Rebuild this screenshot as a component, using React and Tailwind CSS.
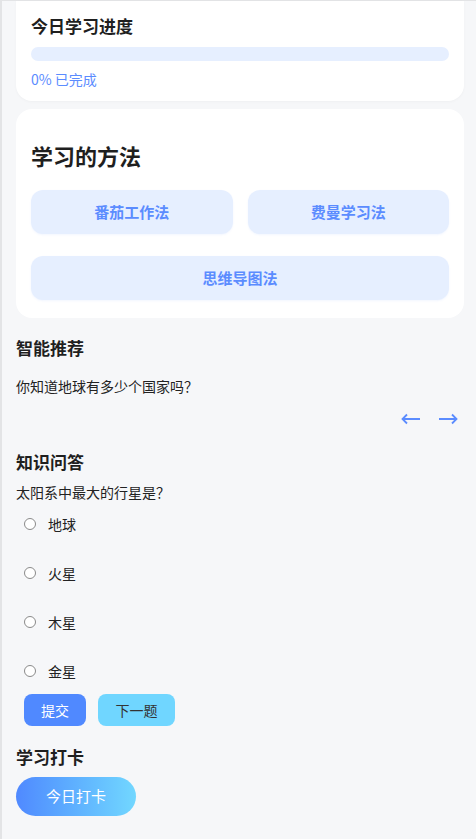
import React, { useState } from 'react';

const font = { fontFamily: '"Noto Sans CJK SC", "Noto Sans", sans-serif' };

const methods = ['番茄工作法', '费曼学习法'];
const options = ['地球', '火星', '木星', '金星'];

export default function App() {
  const [answer, setAnswer] = useState(null);

  return (
    <div
      style={font}
      className="min-h-[839px] bg-[#f6f7f9] border-t border-l-2 border-[#e3e4e6] pl-[14px] pr-[12px] pb-6 text-[#222]"
    >
      {/* Today progress */}
      <div className="bg-white rounded-b-2xl px-[15px] pt-[13px] pb-[12px] shadow-[0_1px_3px_rgba(0,0,0,0.03)]">
        <h3 className="text-[17px] leading-6 font-bold text-[#1f1f1f]">今日学习进度</h3>
        <div className="mt-[9px] h-[14px] rounded-full bg-[#e6efff]" />
        <p className="mt-[8px] text-[14px] leading-5 text-[#5b8cff]">0% 已完成</p>
      </div>

      {/* Methods */}
      <div className="mt-2 bg-white rounded-2xl px-[15px] pt-[31px] pb-[18px]">
        <h2 className="text-[22px] leading-[30px] font-bold text-[#1f1f1f]">学习的方法</h2>
        <div className="mt-5 grid grid-cols-2 gap-x-[15px] gap-y-[22px]">
          {methods.map((m) => (
            <button
              key={m}
              className="h-[44px] rounded-xl bg-[#e6efff] text-[15px] font-bold text-[#5b8cff] shadow-[0_1px_2px_rgba(91,140,255,0.08)]"
            >
              {m}
            </button>
          ))}
          <button className="col-span-2 h-[44px] rounded-xl bg-[#e6efff] text-[15px] font-bold text-[#5b8cff] shadow-[0_1px_2px_rgba(91,140,255,0.08)]">
            思维导图法
          </button>
        </div>
      </div>

      {/* Recommendation */}
      <h3 className="mt-[18px] text-[17px] leading-6 font-bold text-[#1f1f1f]">智能推荐</h3>
      <p className="mt-4 text-[14px] leading-5 text-[#222]">你知道地球有多少个国家吗？</p>
      <div className="mt-3 flex justify-end gap-[17px] pr-[6px] h-[22px] items-center">
        <button className="text-[#5b8cff]">
          <svg width="20" height="12" viewBox="0 0 20 12" fill="none" stroke="currentColor" strokeWidth="1.8">
            <path d="M19 6H2M6 1.5L1.5 6 6 10.5" />
          </svg>
        </button>
        <button className="text-[#5b8cff]">
          <svg width="20" height="12" viewBox="0 0 20 12" fill="none" stroke="currentColor" strokeWidth="1.8">
            <path d="M1 6h17M14 1.5L18.5 6 14 10.5" />
          </svg>
        </button>
      </div>

      {/* Quiz */}
      <h3 className="mt-5 text-[17px] leading-6 font-bold text-[#1f1f1f]">知识问答</h3>
      <p className="mt-2 text-[14px] leading-5">太阳系中最大的行星是？</p>
      <div className="mt-3 ml-2 flex flex-col gap-[29px]">
        {options.map((o) => (
          <label key={o} className="flex items-center gap-3 h-5 text-[14px] cursor-pointer">
            <span
              onClick={() => setAnswer(o)}
              className={`w-[12px] h-[12px] rounded-full border ${answer === o ? 'border-[4px] border-[#5b8cff]' : 'border-[#8a8a8a]'} bg-white`}
            />
            <span onClick={() => setAnswer(o)}>{o}</span>
          </label>
        ))}
      </div>
      <div className="mt-[13px] ml-2 flex gap-3">
        <button className="w-[62px] h-[32px] rounded-lg bg-[#5089ff] text-white text-[14px]">提交</button>
        <button className="w-[77px] h-[32px] rounded-lg bg-[#70d6ff] text-[#333] text-[14px]">下一题</button>
      </div>

      {/* Check-in */}
      <h3 className="mt-[19px] text-[17px] leading-6 font-bold text-[#1f1f1f]">学习打卡</h3>
      <button className="mt-2 w-[120px] h-[39px] rounded-[20px] bg-gradient-to-r from-[#5089ff] to-[#72d7ff] text-white text-[15px]">
        今日打卡
      </button>
    </div>
  );
}
